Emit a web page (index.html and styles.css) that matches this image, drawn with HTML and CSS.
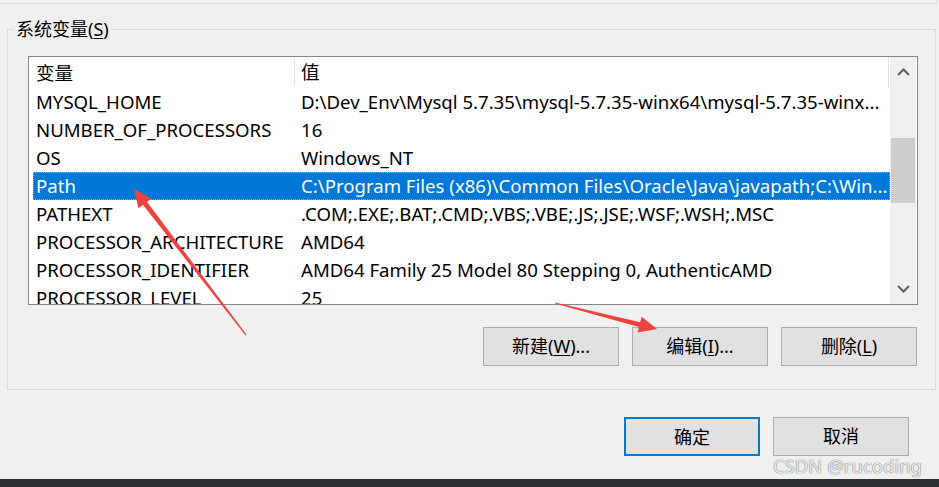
FILE: index.html
```html
<!DOCTYPE html>
<html lang="zh-CN">
<head>
<meta charset="utf-8">
<title>环境变量</title>
<link rel="stylesheet" href="styles.css">
</head>
<body>
<div class="page">
  <div class="prev-group"></div>
  <div class="group">
    <div class="group-title">系统变量(<u>S</u>)</div>
    <div class="listview">
      <div class="list-main">
        <div class="list-header">
          <div class="hcell">变量</div>
          <div class="hcell hcell-val">值</div>
        </div>
        <div class="row"><div class="c1">MYSQL_HOME</div><div class="c2">D:\Dev_Env\Mysql 5.7.35\mysql-5.7.35-winx64\mysql-5.7.35-winx...</div></div>
        <div class="row"><div class="c1">NUMBER_OF_PROCESSORS</div><div class="c2">16</div></div>
        <div class="row"><div class="c1">OS</div><div class="c2">Windows_NT</div></div>
        <div class="row selected"><div class="c1">Path</div><div class="c2">C:\Program Files (x86)\Common Files\Oracle\Java\javapath;C:\Win...</div></div>
        <div class="row"><div class="c1">PATHEXT</div><div class="c2">.COM;.EXE;.BAT;.CMD;.VBS;.VBE;.JS;.JSE;.WSF;.WSH;.MSC</div></div>
        <div class="row"><div class="c1">PROCESSOR_ARCHITECTURE</div><div class="c2">AMD64</div></div>
        <div class="row"><div class="c1">PROCESSOR_IDENTIFIER</div><div class="c2">AMD64 Family 25 Model 80 Stepping 0, AuthenticAMD</div></div>
        <div class="row"><div class="c1">PROCESSOR_LEVEL</div><div class="c2">25</div></div>
      </div>
      <div class="scrollbar">
        <div class="sb-btn">
          <svg width="26" height="30" viewBox="0 0 26 30"><polyline points="8,18 13.5,12.5 19,18" fill="none" stroke="#606060" stroke-width="2"/></svg>
        </div>
        <div class="sb-track"><div class="sb-thumb"></div></div>
        <div class="sb-btn">
          <svg width="26" height="30" viewBox="0 0 26 30"><polyline points="8,12 13.5,17.5 19,12" fill="none" stroke="#606060" stroke-width="2"/></svg>
        </div>
      </div>
    </div>
    <div class="btn-row">
      <button class="btn">新建(<u>W</u>)...</button>
      <button class="btn">编辑(<u>I</u>)...</button>
      <button class="btn">删除(<u>L</u>)</button>
    </div>
  </div>
  <div class="footer">
    <button class="btn btn-default">确定</button>
    <button class="btn">取消</button>
  </div>
  <div class="bottom-bar"></div>
  <div class="watermark">CSDN @rucoding</div>
  <svg class="arrows" width="939" height="487" viewBox="0 0 939 487">
    <polygon fill="#f2403c" points="134,189 151.3,198.4 146.9,201.8 246.6,334.7 245.6,335.5 142.9,204.8 138.5,208.2"/>
    <polygon fill="#f2403c" points="657,329 637.6,332.4 639,327 554.9,303.6 555.1,302.4 640.2,322.2 641.6,316.8"/>
  </svg>
</div>
</body>
</html>
```
FILE: styles.css
```css
* { box-sizing: border-box; }
html, body { margin: 0; padding: 0; }
body {
  background: #f0f0f0;
  font-family: "Noto Sans", "Noto Sans CJK SC", sans-serif;
  font-size: 18.6px;
  color: #000;
}
.page {
  position: relative;
  width: 939px;
  height: 487px;
  display: flex;
  flex-direction: column;
  overflow: hidden;
}
.prev-group {
  width: 937px;
  height: 4px;
  border-bottom: 1px solid #dcdcdc;
  border-right: 1px solid #dcdcdc;
}
.group {
  margin: 25px 0 0 7px;
  width: 929px;
  border: 1px solid #dcdcdc;
  padding: 0 17px 23px 20px;
}
.group-title {
  width: fit-content;
  margin: -13px 0 0 -14px;
  padding: 0 2px;
  line-height: 24px;
  font-size: 18px;
  background: #f0f0f0;
}
u { text-decoration-thickness: 1px; text-underline-offset: 2px; }
.listview {
  margin-top: 15px;
  height: 249px;
  border: 1px solid #828790;
  background: #fff;
  display: flex;
  overflow: hidden;
}
.list-main {
  flex: 1;
  min-width: 0;
  padding-left: 4px;
}
.list-header {
  display: grid;
  grid-template-columns: 261px 1fr;
  height: 31px;
  align-items: stretch;
  border-right: 1px solid #e5e5e5;
  margin-right: 1px;
}
.hcell {
  padding-left: 3px;
  line-height: 31px;
}
.hcell-val {
  padding-left: 6px;
  border-left: 1px solid #e5e5e5;
  margin: 1px 0 2px;
  line-height: 28px;
}
.row {
  display: grid;
  grid-template-columns: 268px 1fr;
  height: 28px;
  line-height: 28px;
  white-space: nowrap;
}
.row .c1 { padding-left: 3px; overflow: hidden; }
.row .c2 { overflow: hidden; }
.row.selected {
  background: #0078d7;
  color: #fff;
  outline: 1px dotted #e69a4c;
  outline-offset: -1px;
}
.scrollbar {
  width: 26px;
  margin-right: 1px;
  background: #f0f0f0;
  display: flex;
  flex-direction: column;
}
.sb-btn { height: 30px; display: flex; }
.sb-track { flex: 1; padding: 51px 1px 0 1px; }
.sb-thumb { height: 65px; background: #cdcdcd; }
.btn-row {
  margin-top: 22px;
  padding-right: 1px;
  display: flex;
  justify-content: flex-end;
  gap: 13px;
}
.btn {
  width: 136px;
  height: 39px;
  border: 1px solid #adadad;
  background: #e1e1e1;
  font-family: "Noto Sans", "Noto Sans CJK SC", sans-serif;
  font-size: 18px;
  color: #000;
  padding: 0;
  line-height: 37px;
}
.btn-default {
  border: 2px solid #0078d7;
}
.footer {
  margin-top: 27px;
  padding-right: 30px;
  display: flex;
  justify-content: flex-end;
  gap: 13px;
}
.bottom-bar {
  margin-top: auto;
  height: 8px;
  background: #2c2f33;
}
.watermark {
  position: absolute;
  left: 773px;
  top: 453px;
  font-size: 18.5px;
  color: rgba(248, 248, 248, 0.9);
  text-shadow: 0 0 1px #7a7a7a, 0 0 1px #7a7a7a;
}
.arrows {
  position: absolute;
  left: 0;
  top: 0;
  pointer-events: none;
}
```
